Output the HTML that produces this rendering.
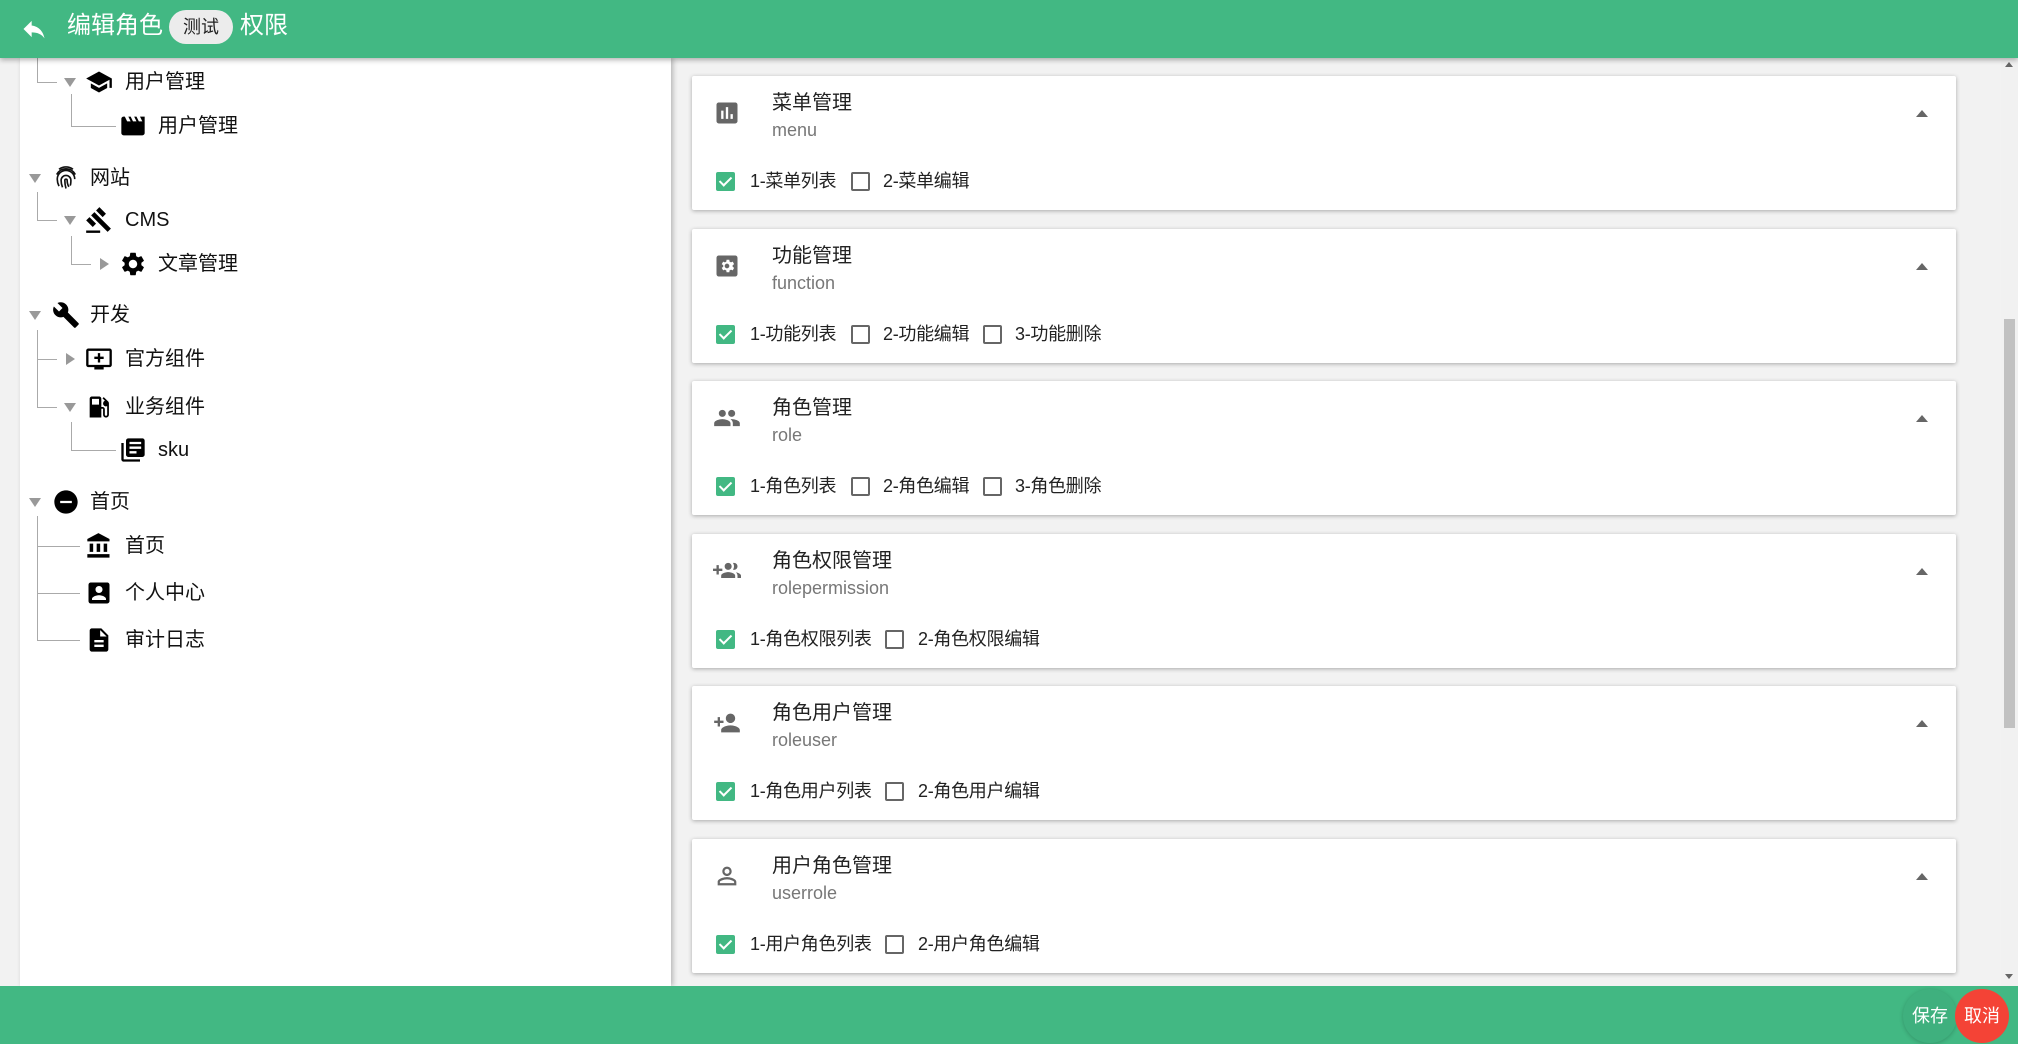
<!DOCTYPE html>
<html><head><meta charset="utf-8"><style>
*{box-sizing:border-box;margin:0;padding:0}
body{width:2018px;height:1044px;overflow:hidden;background:#f2f2f2;font-family:"Liberation Sans","Noto Sans CJK SC",sans-serif;position:relative;color:#222}
.hdr{position:absolute;left:0;top:0;width:2018px;height:58px;background:#42b883;box-shadow:0 2px 5px rgba(0,0,0,.3);z-index:5}
.hdr .t{position:absolute;top:11px;font-size:24px;color:#fff;line-height:30px}
.chip{position:absolute;left:169px;top:10px;width:64px;height:34px;border-radius:17px;background:#ececec;color:#222;font-size:18px;line-height:34px;text-align:center}
.left{position:absolute;left:20px;top:58px;width:651px;height:928px;background:#fff;box-shadow:2px 0 5px rgba(0,0,0,.25)}
.row{position:absolute;font-size:20px;line-height:28px;color:#111}
.row svg{position:absolute;width:28px;height:28px}
.car{position:absolute;width:0;height:0}
.cd{border-left:6px solid transparent;border-right:6px solid transparent;border-top:9px solid #999}
.cr{border-top:6px solid transparent;border-bottom:6px solid transparent;border-left:9px solid #999}
.ln{position:absolute;background:#aaa}
.card{position:absolute;left:692px;width:1264px;height:134px;background:#fff;box-shadow:0 1px 4px rgba(0,0,0,.3);border-radius:2px}
.card svg.ic{position:absolute;left:21px;top:23px;width:28px;height:28px;fill:#666}
.card .ti{position:absolute;left:80px;top:10px;font-size:20px;color:#222}
.card .su{position:absolute;left:80px;top:44px;font-size:18px;color:#777}
.card .up{position:absolute;right:28px;top:34px;width:0;height:0;border-left:6px solid transparent;border-right:6px solid transparent;border-bottom:7px solid #666}
.cb{position:absolute;top:96px;width:19px;height:19px;border-radius:2px;border:2px solid #666}
.cb.on{background:#42b883;border-color:#42b883}
.cb.on:after{content:"";position:absolute;left:4px;top:0px;width:5px;height:10px;border:solid #fff;border-width:0 2px 2px 0;transform:rotate(45deg)}
.lb{position:absolute;top:93px;font-size:18px;color:#222;line-height:24px;letter-spacing:-0.3px}
.ftr{position:absolute;left:0;top:986px;width:2018px;height:58px;background:#42b883}
.btn{position:absolute;top:989px;width:54px;height:54px;border-radius:50%;color:#fff;font-size:18px;line-height:54px;text-align:center}
.sb{position:absolute;left:2001px;top:58px;width:17px;height:928px;background:#f1f1f1}
</style></head><body>
<div class="hdr">
<svg style="position:absolute;left:20px;top:15px;width:28px;height:28px" viewBox="0 0 24 24" fill="#fff"><path d="M10 9V5l-7 7 7 7v-4.1c5 0 8.5 1.6 11 5.1-1-5-4-10-11-11z"/></svg>
<div class="t" style="left:67px">编辑角色</div>
<div class="chip">测试</div>
<div class="t" style="left:240px">权限</div>
</div>

<div class="left">
<div class="ln" style="left:17px;top:0;width:1px;height:24px"></div>
<div class="ln" style="left:17px;top:24px;width:20px;height:1px"></div>
<div class="ln" style="left:51px;top:36px;width:1px;height:32px"></div>
<div class="ln" style="left:51px;top:68px;width:45px;height:1px"></div>
<div class="ln" style="left:17px;top:134px;width:1px;height:28px"></div>
<div class="ln" style="left:17px;top:162px;width:20px;height:1px"></div>
<div class="ln" style="left:51px;top:178px;width:1px;height:28px"></div>
<div class="ln" style="left:51px;top:206px;width:20px;height:1px"></div>
<div class="ln" style="left:17px;top:272px;width:1px;height:77px"></div>
<div class="ln" style="left:17px;top:301px;width:20px;height:1px"></div>
<div class="ln" style="left:17px;top:349px;width:20px;height:1px"></div>
<div class="ln" style="left:51px;top:364px;width:1px;height:28px"></div>
<div class="ln" style="left:51px;top:392px;width:45px;height:1px"></div>
<div class="ln" style="left:17px;top:458px;width:1px;height:124px"></div>
<div class="ln" style="left:17px;top:488px;width:43px;height:1px"></div>
<div class="ln" style="left:17px;top:535px;width:43px;height:1px"></div>
<div class="ln" style="left:17px;top:582px;width:43px;height:1px"></div>
</div>

<div class="car cd" style="left:64px;top:78px"></div>
<div class="row" style="left:85px;top:68px"><svg viewBox="0 0 24 24"><path d="M5 13.18v4L12 21l7-3.82v-4L12 17l-7-3.82zM12 3L1 9l11 6 9-4.91V17h2V9L12 3z"/></svg><span style="position:absolute;left:40px;white-space:nowrap">用户管理</span></div>
<div class="row" style="left:119px;top:112px"><svg viewBox="0 0 24 24"><path d="M18 4l2 4h-3l-2-4h-2l2 4h-3l-2-4H8l2 4H7L5 4H4c-1.1 0-1.990.9-1.990 2L2 18c0 1.1.9 2 2 2h16c1.1 0 2-.9 2-2V4h-4z"/></svg><span style="position:absolute;left:39px;white-space:nowrap">用户管理</span></div>

<div class="car cd" style="left:29px;top:174px"></div>
<div class="row" style="left:52px;top:164px"><svg viewBox="0 0 24 24" fill="none" stroke="#111" stroke-width="1.4"><path d="M6 4.5a10 10 0 0112 0M4 9a9 9 0 0116 0M6 19c-1-2-1.5-4-1.5-6a7.5 7.5 0 0115 0M9 20c-.8-2-1.2-4-1.2-6a4.2 4.2 0 018.4 0c0 1.5 0 3-.6 4.5M12 21c-.6-2-1-4.5-1-7a1 1 0 012 0c0 2 .5 4 1.5 5.5"/></svg><span style="position:absolute;left:38px;white-space:nowrap">网站</span></div>
<div class="car cd" style="left:64px;top:216px"></div>
<div class="row" style="left:85px;top:206px"><svg viewBox="0 0 24 24"><path d="M1 21h12v2H1zM5.245 8.07l2.830-2.827 14.140 14.142-2.828 2.828zM12.317 1l5.657 5.656-2.830 2.830-5.654-5.660zM3.825 9.485l5.657 5.657-2.828 2.828-5.657-5.657z"/></svg><span style="position:absolute;left:40px;white-space:nowrap">CMS</span></div>
<div class="car cr" style="left:100px;top:258px"></div>
<div class="row" style="left:119px;top:250px"><svg viewBox="0 0 24 24"><path d="M19.14 12.94c.04-.3.06-.61.06-.94 0-.32-.02-.64-.07-.94l2.03-1.58a.49.49 0 00.12-.61l-1.92-3.32a.488.488 0 00-.59-.22l-2.39.96c-.5-.38-1.03-.7-1.62-.94l-.36-2.54a.484.484 0 00-.48-.41h-3.84c-.24 0-.43.17-.47.41l-.36 2.54c-.59.24-1.13.57-1.62.94l-2.39-.96c-.22-.08-.47 0-.59.22L2.74 8.87c-.12.21-.08.47.12.61l2.03 1.58c-.05.3-.09.63-.09.94s.02.64.07.94l-2.03 1.58a.49.49 0 00-.12.61l1.92 3.32c.12.22.37.29.59.22l2.39-.96c.5.38 1.03.7 1.62.94l.36 2.54c.05.24.24.41.48.41h3.84c.24 0 .44-.17.47-.41l.36-2.54c.59-.24 1.13-.56 1.62-.94l2.39.96c.22.08.47 0 .59-.22l1.92-3.32c.12-.22.07-.47-.12-.61l-2.01-1.58zM12 15.6c-1.98 0-3.6-1.62-3.6-3.6s1.62-3.6 3.6-3.6 3.6 1.62 3.6 3.6-1.62 3.6-3.6 3.6z"/></svg><span style="position:absolute;left:39px;white-space:nowrap">文章管理</span></div>

<div class="car cd" style="left:29px;top:311px"></div>
<div class="row" style="left:52px;top:301px"><svg viewBox="0 0 24 24"><path d="M22.7 19l-9.1-9.1c.9-2.3.4-5-1.5-6.9-2-2-5-2.4-7.4-1.3L9 6 6 9 1.6 4.7C.4 7.1.9 10.1 2.9 12.1c1.9 1.9 4.6 2.4 6.9 1.5l9.1 9.1c.4.4 1 .4 1.4 0l2.3-2.3c.5-.4.5-1.1.1-1.4z"/></svg><span style="position:absolute;left:38px;white-space:nowrap">开发</span></div>
<div class="car cr" style="left:66px;top:353px"></div>
<div class="row" style="left:85px;top:345px"><svg viewBox="0 0 24 24"><path d="M21 3H3c-1.11 0-2 .89-2 2v12c0 1.1.89 2 2 2h5v2h8v-2h5c1.1 0 1.99-.9 1.99-2L23 5c0-1.11-.9-2-2-2zm0 14H3V5h18v12zm-8-2h-2v-3H8v-2h3V7h2v3h3v2h-3v3z"/></svg><span style="position:absolute;left:40px;white-space:nowrap">官方组件</span></div>
<div class="car cd" style="left:64px;top:403px"></div>
<div class="row" style="left:85px;top:393px"><svg viewBox="0 0 24 24"><path d="M19.77 7.23l.01-.01-3.72-3.72L15 4.56l2.11 2.11c-.94.36-1.61 1.26-1.61 2.33 0 1.38 1.12 2.5 2.5 2.5.36 0 .69-.08 1-.21v7.21c0 .55-.45 1-1 1s-1-.45-1-1V14c0-1.1-.9-2-2-2h-1V5c0-1.1-.9-2-2-2H6c-1.1 0-2 .9-2 2v16h10v-7.5h1.5v5c0 1.38 1.12 2.5 2.5 2.5s2.5-1.12 2.5-2.5V9c0-.69-.28-1.32-.73-1.77zM12 10H6V5h6v5z"/></svg><span style="position:absolute;left:40px;white-space:nowrap">业务组件</span></div>
<div class="row" style="left:119px;top:436px"><svg viewBox="0 0 24 24"><path d="M4 6H2v14c0 1.1.9 2 2 2h14v-2H4V6zm16-4H8c-1.1 0-2 .9-2 2v12c0 1.1.9 2 2 2h12c1.1 0 2-.9 2-2V4c0-1.1-.9-2-2-2zm-1 9H9V9h10v2zm-4 4H9v-2h6v2zm4-8H9V5h10v2z"/></svg><span style="position:absolute;left:39px;white-space:nowrap">sku</span></div>

<div class="car cd" style="left:29px;top:498px"></div>
<div class="row" style="left:52px;top:488px"><svg viewBox="0 0 24 24"><path d="M12 2C6.48 2 2 6.48 2 12s4.48 10 10 10 10-4.48 10-10S17.52 2 12 2zm5 11H7v-2h10v2z"/></svg><span style="position:absolute;left:38px;white-space:nowrap">首页</span></div>
<div class="row" style="left:85px;top:532px"><svg viewBox="0 0 24 24"><path d="M4 10v7h3v-7H4zm6 0v7h3v-7h-3zM2 22h19v-3H2v3zm14-12v7h3v-7h-3zm-4.5-9L2 6v2h19V6l-9.5-5z"/></svg><span style="position:absolute;left:40px;white-space:nowrap">首页</span></div>
<div class="row" style="left:85px;top:579px"><svg viewBox="0 0 24 24"><path d="M3 5v14a2 2 0 002 2h14c1.1 0 2-.9 2-2V5c0-1.1-.9-2-2-2H5a2 2 0 00-2 2zm12 4c0 1.66-1.34 3-3 3s-3-1.34-3-3 1.34-3 3-3 3 1.34 3 3zm-9 8c0-2 4-3.1 6-3.1s6 1.1 6 3.1v1H6v-1z"/></svg><span style="position:absolute;left:40px;white-space:nowrap">个人中心</span></div>
<div class="row" style="left:85px;top:626px"><svg viewBox="0 0 24 24"><path d="M14 2H6c-1.1 0-1.99.9-1.99 2L4 20c0 1.1.89 2 1.99 2H18c1.1 0 2-.9 2-2V8l-6-6zm2 16H8v-2h8v2zm0-4H8v-2h8v2zm-3-5V3.5L18.5 9H13z"/></svg><span style="position:absolute;left:40px;white-space:nowrap">审计日志</span></div>

<div class="card" style="top:76px">
<svg class="ic" viewBox="0 0 24 24"><path d="M19 3H5c-1.1 0-2 .9-2 2v14c0 1.1.9 2 2 2h14c1.1 0 2-.9 2-2V5c0-1.1-.9-2-2-2zM9 17H7v-7h2v7zm4 0h-2V7h2v10zm4 0h-2v-4h2v4z"/></svg>
<div class="ti">菜单管理</div><div class="su">menu</div><div class="up"></div>
<div class="cb on" style="left:24px"></div><div class="lb" style="left:58px">1-菜单列表</div>
<div class="cb" style="left:159px"></div><div class="lb" style="left:191px">2-菜单编辑</div>
</div>
<div class="card" style="top:229px">
<svg class="ic" viewBox="0 0 24 24"><path d="M19 3H5a2 2 0 00-2 2v14a2 2 0 002 2h14a2 2 0 002-2V5a2 2 0 00-2-2zm-2.2 9.6l1.3 1-1.2 2.1-1.5-.6c-.4.3-.8.5-1.2.7l-.2 1.6h-2.4l-.2-1.6c-.5-.2-.9-.4-1.2-.7l-1.5.6-1.2-2.1 1.3-1c-.1-.4-.1-.8 0-1.2l-1.3-1 1.2-2.1 1.5.6c.4-.3.8-.5 1.2-.7l.2-1.6h2.4l.2 1.6c.5.2.9.4 1.2.7l1.5-.6 1.2 2.1-1.3 1c.1.4.1.8 0 1.2zM12 10a2 2 0 100 4 2 2 0 000-4z"/></svg>
<div class="ti">功能管理</div><div class="su">function</div><div class="up"></div>
<div class="cb on" style="left:24px"></div><div class="lb" style="left:58px">1-功能列表</div>
<div class="cb" style="left:159px"></div><div class="lb" style="left:191px">2-功能编辑</div>
<div class="cb" style="left:291px"></div><div class="lb" style="left:323px">3-功能删除</div>
</div>
<div class="card" style="top:381px">
<svg class="ic" viewBox="0 0 24 24"><path d="M16 11c1.66 0 2.99-1.34 2.99-3S17.66 5 16 5c-1.66 0-3 1.34-3 3s1.34 3 3 3zm-8 0c1.66 0 2.99-1.34 2.99-3S9.66 5 8 5C6.34 5 5 6.34 5 8s1.34 3 3 3zm0 2c-2.33 0-7 1.17-7 3.5V19h14v-2.5c0-2.33-4.67-3.5-7-3.5zm8 0c-.29 0-.62.02-.97.05 1.16.84 1.97 1.97 1.97 3.45V19h6v-2.5c0-2.33-4.67-3.5-7-3.5z"/></svg>
<div class="ti">角色管理</div><div class="su">role</div><div class="up"></div>
<div class="cb on" style="left:24px"></div><div class="lb" style="left:58px">1-角色列表</div>
<div class="cb" style="left:159px"></div><div class="lb" style="left:191px">2-角色编辑</div>
<div class="cb" style="left:291px"></div><div class="lb" style="left:323px">3-角色删除</div>
</div>
<div class="card" style="top:534px">
<svg class="ic" viewBox="0 0 24 24"><path d="M8 10H5V7H3v3H0v2h3v3h2v-3h3v-2zm10 1c1.66 0 2.99-1.34 2.99-3S19.66 5 18 5c-.32 0-.63.05-.91.14.57.81.9 1.79.9 2.86s-.34 2.04-.9 2.86c.28.09.59.14.91.14zm-5 0c1.66 0 2.99-1.34 2.99-3S14.66 5 13 5c-1.66 0-3 1.34-3 3s1.34 3 3 3zm6.62 2.16c.83.73 1.38 1.66 1.38 2.84v2h3v-2c0-1.54-2.37-2.49-4.38-2.84zM13 13c-2 0-6 1-6 3v2h12v-2c0-2-4-3-6-3z"/></svg>
<div class="ti">角色权限管理</div><div class="su">rolepermission</div><div class="up"></div>
<div class="cb on" style="left:24px"></div><div class="lb" style="left:58px">1-角色权限列表</div>
<div class="cb" style="left:193px"></div><div class="lb" style="left:226px">2-角色权限编辑</div>
</div>
<div class="card" style="top:686px">
<svg class="ic" viewBox="0 0 24 24"><path d="M15 12c2.21 0 4-1.79 4-4s-1.79-4-4-4-4 1.79-4 4 1.79 4 4 4zm-9-2V7H4v3H1v2h3v3h2v-3h3v-2H6zm9 4c-2.67 0-8 1.34-8 4v2h16v-2c0-2.66-5.33-4-8-4z"/></svg>
<div class="ti">角色用户管理</div><div class="su">roleuser</div><div class="up"></div>
<div class="cb on" style="left:24px"></div><div class="lb" style="left:58px">1-角色用户列表</div>
<div class="cb" style="left:193px"></div><div class="lb" style="left:226px">2-角色用户编辑</div>
</div>
<div class="card" style="top:839px">
<svg class="ic" viewBox="0 0 24 24"><path d="M12 5.9c1.16 0 2.1.94 2.1 2.1s-.94 2.1-2.1 2.1S9.9 9.16 9.9 8s.94-2.1 2.1-2.1m0 9c2.97 0 6.1 1.46 6.1 2.1v1.1H5.9V17c0-.64 3.13-2.1 6.1-2.1M12 4C9.79 4 8 5.79 8 8s1.79 4 4 4 4-1.79 4-4-1.79-4-4-4zm0 9c-2.67 0-8 1.34-8 4v3h16v-3c0-2.66-5.33-4-8-4z"/></svg>
<div class="ti">用户角色管理</div><div class="su">userrole</div><div class="up"></div>
<div class="cb on" style="left:24px"></div><div class="lb" style="left:58px">1-用户角色列表</div>
<div class="cb" style="left:193px"></div><div class="lb" style="left:226px">2-用户角色编辑</div>
</div>

<div class="sb">
<div style="position:absolute;left:3px;top:261px;width:11px;height:409px;background:#c1c1c1"></div>
<div style="position:absolute;left:4px;top:4px;width:0;height:0;border-left:4px solid transparent;border-right:4px solid transparent;border-bottom:5px solid #666"></div>
<div style="position:absolute;left:4px;top:916px;width:0;height:0;border-left:4px solid transparent;border-right:4px solid transparent;border-top:5px solid #666"></div>
</div>

<div class="ftr"></div>
<div class="btn" style="left:1903px;background:#3fb07e;box-shadow:0 1px 4px rgba(0,0,0,.2)">保存</div>
<div class="btn" style="left:1955px;background:#f44336">取消</div>
</body></html>
